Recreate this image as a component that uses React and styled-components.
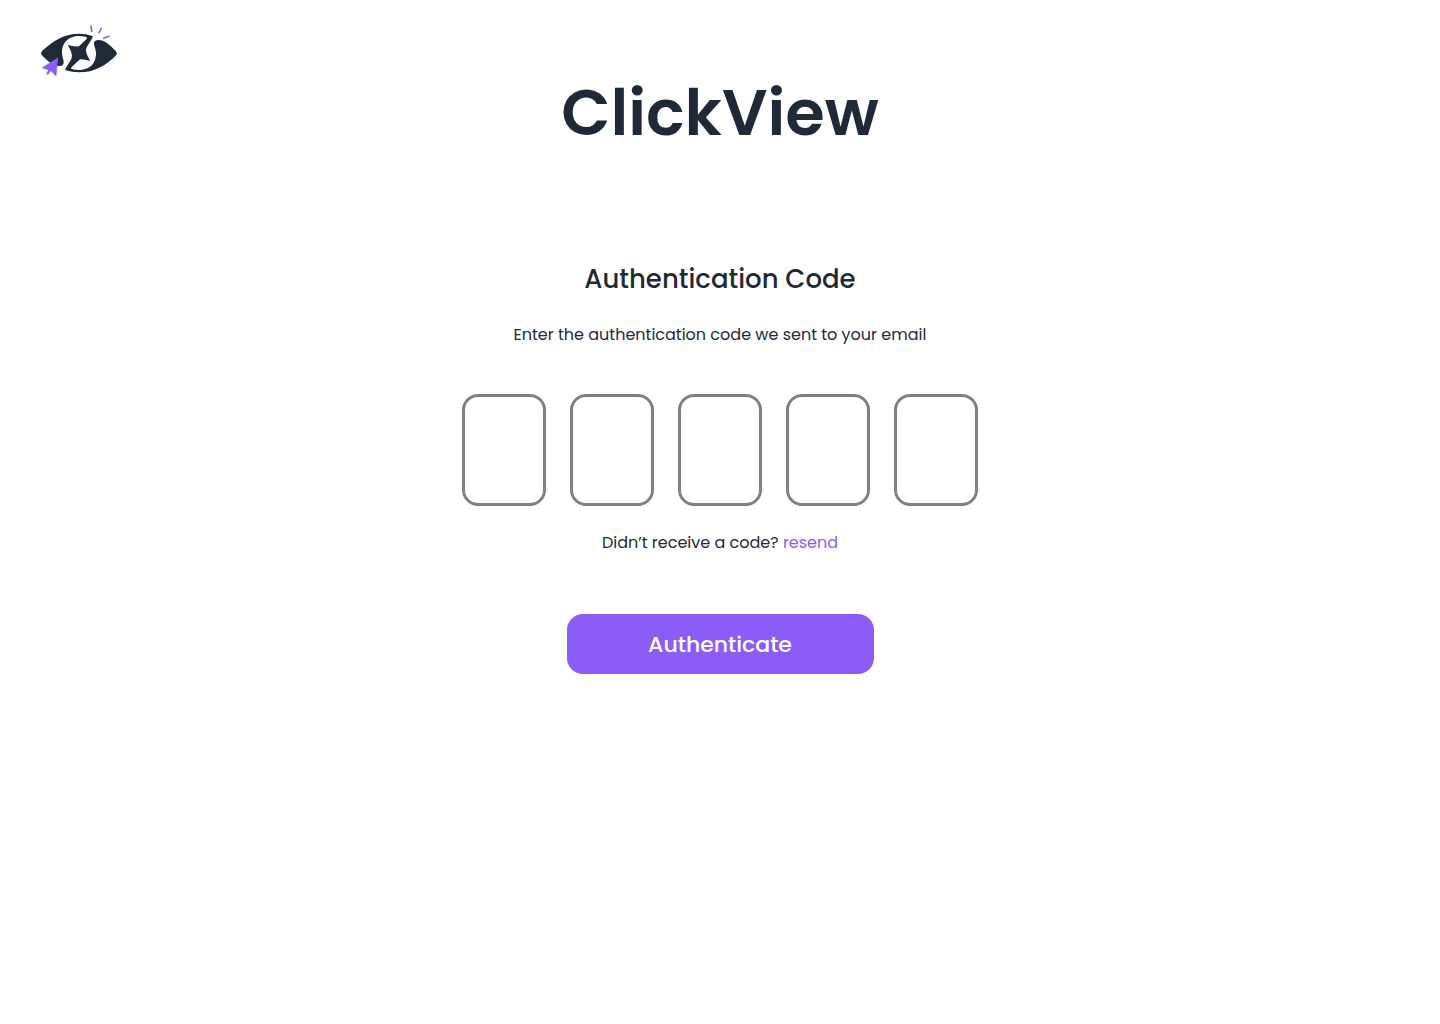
import React from "react";
import styled, { createGlobalStyle } from "styled-components";

const ink = "#1f2937";
const violet = "#8b5cf6";

const GlobalStyle = createGlobalStyle`
  *, *::before, *::after { box-sizing: border-box; }
  body {
    margin: 0;
    background: #fff;
    color: ${ink};
    font-family: Poppins, Inter, "Open Sans", sans-serif;
    font-size: 16px;
    line-height: 26px;
  }
`;

const Page = styled.div`
  display: flex;
  flex-direction: column;
  min-height: 100vh;
`;

const Header = styled.header`
  display: grid;
  grid-template-columns: 1fr auto 1fr;
  align-items: start;
  padding: 24px 40px 0;
`;

const HomeLink = styled.a`
  display: block;
  justify-self: start;
  line-height: 0;
`;

const Brand = styled.h1`
  margin: 0;
  padding-top: 40px;
  font-size: 64px;
  font-weight: 600;
  line-height: 98px;
`;

const Form = styled.form`
  display: flex;
  flex-direction: column;
  align-items: center;
  padding: 98px 24px 40px;
`;

const Title = styled.h2`
  margin: 0;
  font-size: 26px;
  font-weight: 500;
  line-height: 38px;
`;

const Text = styled.p`
  margin: 24px 0 0;
`;

const CodeGroup = styled.fieldset`
  display: flex;
  gap: 24px;
  margin: 46px 0 0;
  padding: 0;
  border: 0;
`;

const Digit = styled.input`
  width: 84px;
  height: 112px;
  padding: 0;
  border: 3px solid #808080;
  border-radius: 16px;
  background: #fff;
  color: inherit;
  font: inherit;
  font-size: 40px;
  text-align: center;
  outline: none;

  &:focus { border-color: ${violet}; }
`;

const Resend = styled.a`
  color: ${violet};
  text-decoration: none;
`;

const Submit = styled.button`
  width: 100%;
  max-width: 307px;
  height: 60px;
  margin-top: 58px;
  padding: 2px 0 0;
  border: 0;
  border-radius: 16px;
  background: ${violet};
  color: #fff;
  font: inherit;
  font-size: 22px;
  font-weight: 500;
  cursor: pointer;
`;

function Logo() {
  return (
    <svg width="78" height="54" viewBox="30 27 234 162" aria-hidden="true">
      <path fill={ink} d="M36 108C66 80 100 56 147 56Q168 56 187 63Q190 65 187 69L170 97Q163 110 181 138Q165 134 150 133L125 156Q121 161 128 163Q137 165 147 165C178 165 198 148 198 115C198 101 191 93 192 83Q193 75 206 75C222 75 239 89 257 108Q264 115 257 122C228 150 195 172 147 172Q126 172 107 166Q104 164 107 160L124 132Q131 118 113 90Q130 95 147 94L169 73Q174 67 166 65Q157 63 147 63C116 63 96 82 96 112C96 127 102 135 101 144Q100 153 88 153C72 153 53 139 37 122Q30 115 36 108Z" />
      <path fill={violet} stroke={violet} strokeWidth="2" strokeLinejoin="round" d="M83 129L37 158L54 164L64 168L78 183Z" />
      <path stroke={violet} strokeWidth="7" strokeLinecap="round" fill="none" d="M62 161L53 175" />
      <path stroke={violet} strokeWidth="5" strokeLinecap="round" fill="none" d="M183 33L185 49M214 41L207 53M237 64L221 70" />
    </svg>
  );
}

const positions = [1, 2, 3, 4, 5];

export default function App() {
  return (
    <Page>
      <GlobalStyle />
      <Header>
        <HomeLink href="#" aria-label="ClickView home"><Logo /></HomeLink>
        <Brand>ClickView</Brand>
      </Header>
      <Form onSubmit={(event) => event.preventDefault()}>
        <Title>Authentication Code</Title>
        <Text>Enter the authentication code we sent to your email</Text>
        <CodeGroup aria-label="Authentication code">
          {positions.map((n) => (
            <Digit key={n} type="text" inputMode="numeric" maxLength={1} aria-label={`Digit ${n}`} />
          ))}
        </CodeGroup>
        <Text>Didn’t receive a code? <Resend href="#">resend</Resend></Text>
        <Submit type="submit">Authenticate</Submit>
      </Form>
    </Page>
  );
}
